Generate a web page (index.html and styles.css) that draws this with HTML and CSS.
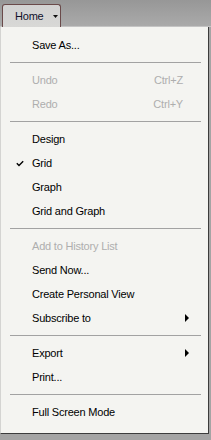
FILE: index.html
```html
<!DOCTYPE html>
<html>
<head>
<meta charset="utf-8">
<link rel="stylesheet" href="styles.css">
</head>
<body>
<div class="topbar">
  <div class="tab">
    <span class="tab-label">Home</span>
    <svg class="tab-caret" width="5" height="3" viewBox="0 0 5 3"><path d="M0 0H5L2.5 3Z" fill="#111"/></svg>
  </div>
</div>
<div class="menu">
  <div class="item"><span class="label">Save As...</span></div>
  <div class="sep"></div>
  <div class="item disabled"><span class="label">Undo</span><span class="shortcut">Ctrl+Z</span></div>
  <div class="item disabled"><span class="label">Redo</span><span class="shortcut">Ctrl+Y</span></div>
  <div class="sep"></div>
  <div class="item"><span class="label">Design</span></div>
  <div class="item checked">
    <svg class="check" width="8" height="7" viewBox="0 0 8 7"><path d="M0.8 3.2L3 5.4L7.2 1.2" fill="none" stroke="#000" stroke-width="1.4"/></svg>
    <span class="label">Grid</span>
  </div>
  <div class="item"><span class="label">Graph</span></div>
  <div class="item"><span class="label">Grid and Graph</span></div>
  <div class="sep"></div>
  <div class="item disabled"><span class="label">Add to History List</span></div>
  <div class="item"><span class="label">Send Now...</span></div>
  <div class="item"><span class="label">Create Personal View</span></div>
  <div class="item"><span class="label">Subscribe to</span>
    <svg class="arrow" width="4" height="8" viewBox="0 0 4 8"><path d="M0 0L4 4L0 8Z" fill="#000"/></svg>
  </div>
  <div class="sep"></div>
  <div class="item"><span class="label">Export</span>
    <svg class="arrow" width="4" height="8" viewBox="0 0 4 8"><path d="M0 0L4 4L0 8Z" fill="#000"/></svg>
  </div>
  <div class="item"><span class="label">Print...</span></div>
  <div class="sep"></div>
  <div class="item"><span class="label">Full Screen Mode</span></div>
</div>
</body>
</html>
```
FILE: styles.css
```css
html, body {
  margin: 0;
  padding: 0;
}
body {
  width: 211px;
  height: 440px;
  overflow: hidden;
  background: #a4a4a4;
  font-family: "Liberation Sans", Arial, sans-serif;
  font-size: 11px;
  letter-spacing: -0.2px;
  color: #000;
}
.topbar {
  height: 26px;
  border-bottom: 1px solid #c4c4c4;
  background: linear-gradient(#979797, #aaaaaa);
  display: flex;
  align-items: flex-end;
  padding-left: 2px;
  box-sizing: content-box;
}
.tab {
  box-sizing: border-box;
  width: 59px;
  height: 23px;
  margin-bottom: -1px;
  border: 1px solid #6a4a4a;
  border-bottom: none;
  border-radius: 3px 3px 0 0;
  background: linear-gradient(#d2d2d2, #d8d8d6);
  display: flex;
  align-items: center;
  padding: 0 0 1px 12px;
  color: #10102a;
}
.tab-label {
  font-size: 11px;
}
.tab-caret {
  margin-left: 9px;
  margin-top: 2px;
}
.menu {
  width: 207px;
  border-left: 1px solid #d4d4d2;
  border-right: 1px solid #3c3c3c;
  border-bottom: 1px solid #3c3c3c;
  background: #f4f4f1;
  padding: 6px 0 9px;
}
.item {
  height: 24px;
  display: flex;
  align-items: center;
  padding-left: 31px;
  position: relative;
}
.label {
  flex: 1;
  white-space: nowrap;
}
.disabled {
  color: #aeaeae;
}
.shortcut {
  margin-right: 25px;
}
.arrow {
  margin-right: 19px;
}
.check {
  position: absolute;
  left: 15px;
  top: 9px;
}
.sep {
  height: 5px;
  margin: 0 7px 0 9px;
  border-bottom: 1px solid #a2a2a2;
  margin-bottom: 5px;
}
```
